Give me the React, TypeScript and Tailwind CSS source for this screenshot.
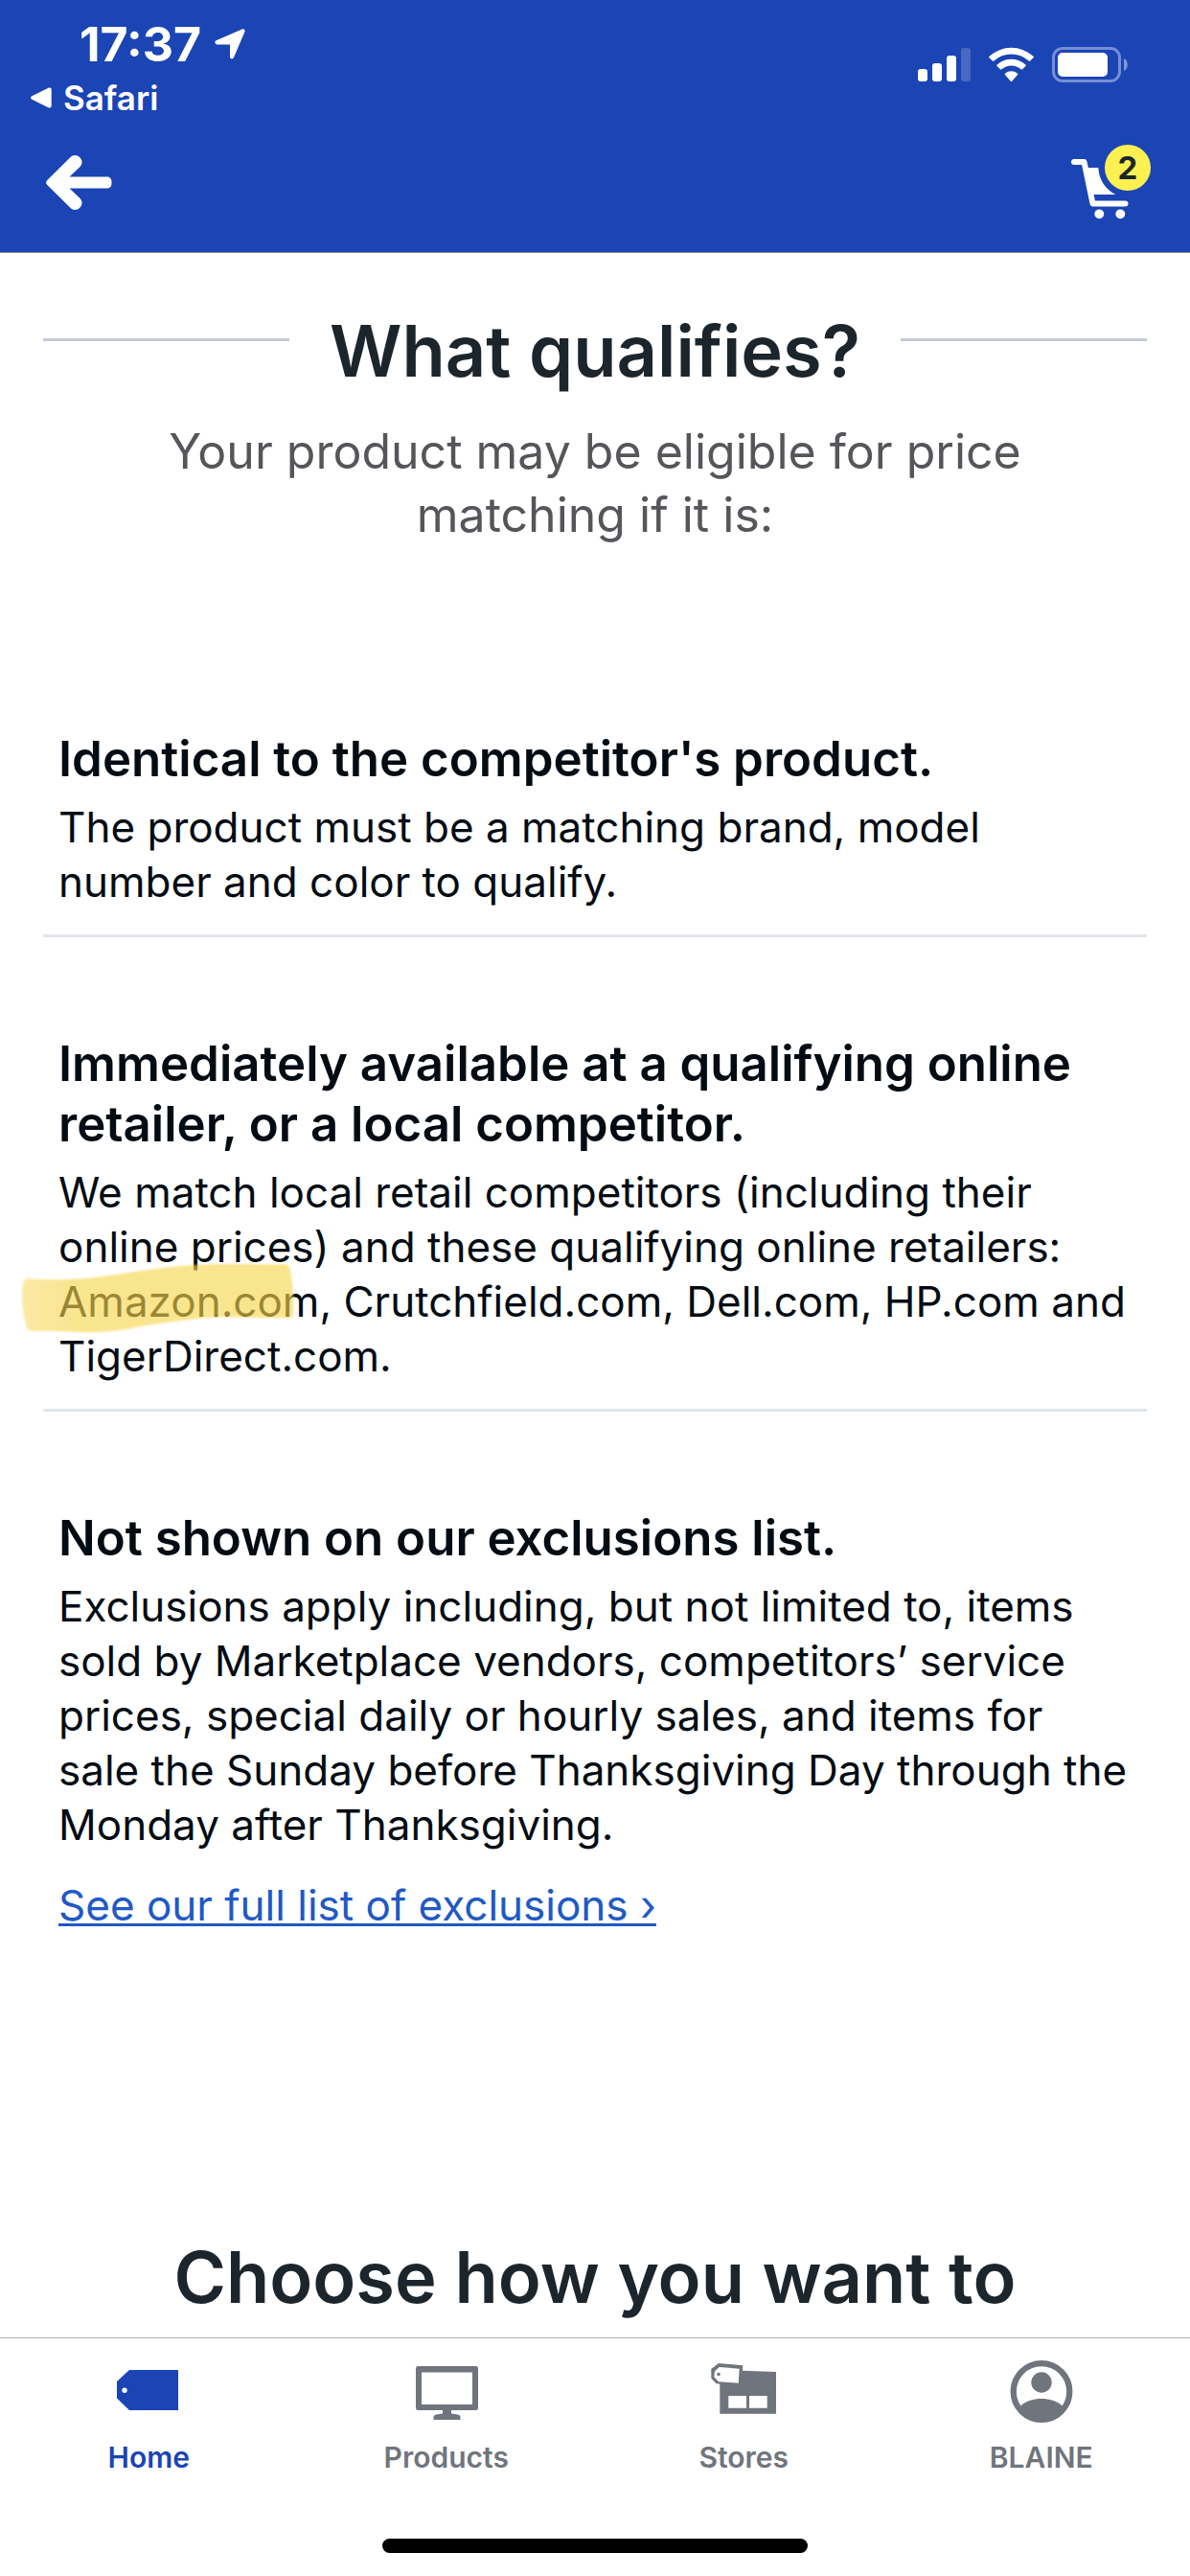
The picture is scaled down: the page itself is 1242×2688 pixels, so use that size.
import React from 'react';

function StatusBar() {
  return (
    <div className="flex items-start justify-between pt-5 pr-[62px] pl-8 text-white">
      <div className="flex flex-col">
        <div className="flex items-center gap-[14px] pl-[51px]">
          <span className="text-[50px] leading-[52px] font-bold">17:37</span>
          <svg className="h-8 w-8" viewBox="0 0 32 32" fill="currentColor" aria-hidden="true">
            <path d="M1.6 12.2 28.6.4c2-.9 3.6.8 2.8 2.8L20 30c-.9 2.1-4 1.6-4-.8V16.400H2.800c-2.500 0-3.400-3.200-1.200-4.200Z" />
          </svg>
        </div>
        <button type="button" className="flex items-center gap-3 self-start text-[35px] leading-[60px] font-semibold">
          <svg className="h-[22px] w-[22px]" viewBox="0 0 22 22" fill="currentColor" aria-hidden="true">
            <path d="M1.3 9.2 18.500.8C20.300 0 21.700.9 21.700 2.500v17c0 1.600-1.400 2.500-3.200 1.700L1.300 12.800C-.3 12-.3 10 1.300 9.200Z" />
          </svg>
          Safari
        </button>
      </div>
      <div className="flex items-center pt-7">
        <svg className="h-[38px] w-[224px]" viewBox="0 0 224 38" fill="currentColor" aria-hidden="true">
          <rect x="2" y="24" width="10" height="13" rx="3" />
          <rect x="17" y="18" width="10" height="19" rx="3" />
          <rect x="32" y="10" width="10" height="27" rx="3" />
          <rect x="47" y="2" width="10" height="35" rx="3" opacity=".2" />
          <path d="M76.500 10.800a34 34 0 0 1 46 0q.8.7 0 1.500l-3.300 3.300q-.7.7-1.500 0a26.800 26.800 0 0 0-36.400 0q-.8.7-1.500 0l-3.300-3.300q-.8-.8 0-1.500Z" />
          <path d="M84.600 19.400a22.500 22.500 0 0 1 29.800 0q.8.7 0 1.500l-3.300 3.300q-.7.7-1.500 0a15.300 15.300 0 0 0-20.200 0q-.8.7-1.500 0l-3.300-3.300q-.8-.8 0-1.500Z" />
          <path d="M92.900 28.700a10.500 10.500 0 0 1 13.200 0q.8.7 0 1.400l-5.700 6.400q-.9 1-1.800 0l-5.700-6.400q-.8-.7 0-1.400Z" />
          <rect x="143.500" y="2.500" width="69" height="34" rx="9.500" fill="none" stroke="currentColor" strokeWidth="3" opacity=".4" />
          <rect x="148" y="7" width="52" height="25" rx="5" />
          <path d="M217 13c5 2 5 11 0 13Z" opacity=".45" />
        </svg>
      </div>
    </div>
  );
}

function AppBar() {
  return (
    <div className="flex items-center justify-between pt-[19px] pr-[41px] pb-[34px] pl-12 text-white">
      <button type="button" aria-label="Back">
        <svg className="h-[57px] w-[69px]" viewBox="0 0 69 57" fill="currentColor" aria-hidden="true">
          <path d="M1.300 26 25.300 2.300c3-3 7-3 10 0s3 7 0 10L24.500 22.500H63.500c3 0 5 2 5 5v2c0 3-2 5-5 5H24.500L35.300 44.700c3 3 3 7 0 10s-7 3-10 0L1.300 31c-1.600-1.600-1.600-3.400 0-5Z" />
        </svg>
      </button>
      <button type="button" aria-label="Cart, 2 items" className="relative h-[78px] w-[84px]">
        <svg className="h-[78px] w-[84px]" viewBox="0 0 84 78" fill="currentColor" aria-hidden="true">
          <path d="M4 18H14.500L23.500 61.500H57.500" fill="none" stroke="currentColor" strokeWidth="6" strokeLinecap="round" strokeLinejoin="round" />
          <path d="M17 24H29.300C30 37 37 47 47.500 52H23Z" />
          <circle cx="30.300" cy="72.300" r="4.900" />
          <circle cx="52.300" cy="72.300" r="4.900" />
        </svg>
        <span className="absolute top-0 right-0 flex h-12 w-12 items-center justify-center rounded-full bg-[#fdf151] text-[33px] leading-none font-bold text-[#1d252c]">
          2
        </span>
      </button>
    </div>
  );
}

function Section({ title, children, last = false }: { title: React.ReactNode; children: React.ReactNode; last?: boolean }) {
  return (
    <section className={last ? 'px-4 pt-[100px]' : 'border-b-[3px] border-[#e0e6ef] px-4 pt-[100px] pb-[26px]'}>
      <h2 className="mb-3 text-[51px] leading-[63px] font-semibold">{title}</h2>
      {children}
    </section>
  );
}

function Tab({ label, active = false, children }: { label: string; active?: boolean; children: React.ReactNode }) {
  return (
    <a
      href="#"
      aria-current={active ? 'page' : undefined}
      className={
        active
          ? 'flex flex-1 flex-col items-center gap-[17px] text-[#1b44b5]'
          : 'flex flex-1 flex-col items-center gap-[17px] text-[#70757d]'
      }
    >
      <svg className="h-[68px] w-[68px]" viewBox="0 0 68 68" fill="currentColor" aria-hidden="true">
        {children}
      </svg>
      <span className="text-[30px] leading-9 font-semibold">{label}</span>
    </a>
  );
}

function Highlight() {
  return (
    <svg className="absolute -top-3 -left-10 h-[72px] w-[290px] overflow-visible" viewBox="0 0 290 72" aria-hidden="true">
      <defs>
        <linearGradient id="marker" x1="0" x2="1" y1="0" y2="0">
          <stop offset="0" stopColor="#f7d54c" stopOpacity=".5" />
          <stop offset=".2" stopColor="#f7d54c" stopOpacity=".62" />
          <stop offset="1" stopColor="#f7d54c" stopOpacity=".62" />
        </linearGradient>
        <filter id="soften" x="-5%" y="-10%" width="110%" height="120%">
          <feGaussianBlur stdDeviation="1.3" />
        </filter>
      </defs>
      <path
        d="M9 15C35 17 60 16 77 14C110 10 145 3 181 1C215 -1 245 1 276 0Q281 0 282 6Q286 30 285 52Q285 57 280 56C250 57 220 54 194 56C170 59 150 61 127 65C105 70 80 72 61 71C45 70 25 70 13 70Q7 70 6 64Q0 40 3 20Q4 15 9 15Z"
        fill="url(#marker)"
        filter="url(#soften)"
      />
    </svg>
  );
}

const titleClass = 'text-[74px] leading-[90px] font-semibold text-[#1d252c]';

export default function App() {
  return (
    <div className="flex h-screen flex-col overflow-hidden bg-white font-['Inter',sans-serif] text-[#040c13]">
      <header className="border-b border-[#8e8e93] bg-[#1b44b5]">
        <StatusBar />
        <AppBar />
      </header>

      <main className="min-h-0 flex-1 overflow-hidden px-[45px] pt-[57px]">
        <div className="flex items-start gap-[42px]">
          <span className="mt-8 h-[3px] flex-1 bg-[#c5cad8]" />
          <h1 className={titleClass}>What qualifies?</h1>
          <span className="mt-8 h-[3px] flex-1 bg-[#c5cad8]" />
        </div>
        <p className="mt-[27px] text-center text-[50px] leading-[66px] text-[#55555a]">
          Your product may be eligible for price
          <br />
          matching if it is:
        </p>

        <div className="mt-[90px] text-[44px] leading-[57px]">
          <Section title="Identical to the competitor's product.">
            <p>
              The product must be a matching brand, model
              <br />
              number and color to qualify.
            </p>
          </Section>
          <Section
            title={
              <>
                Immediately available at a qualifying online
                <br />
                retailer, or a local competitor.
              </>
            }
          >
            <p>
              We match local retail competitors (including their
              <br />
              online prices) and these qualifying online retailers:
              <br />
              <span className="relative">
                Amazon.com
                <Highlight />
              </span>
              , Crutchfield.com, Dell.com, HP.com and
              <br />
              TigerDirect.com.
            </p>
          </Section>
          <Section title="Not shown on our exclusions list." last>
            <p>
              Exclusions apply including, but not limited to, items
              <br />
              sold by Marketplace vendors, competitors’ service
              <br />
              prices, special daily or hourly sales, and items for
              <br />
              sale the Sunday before Thanksgiving Day through the
              <br />
              Monday after Thanksgiving.
            </p>
            <p className="mt-[27px]">
              <a href="#" className="text-[#2159c4] underline decoration-[3px] underline-offset-[3px]">
                See our full list of exclusions ›
              </a>
            </p>
          </Section>
        </div>

        <h2 className={`mt-[314px] text-center ${titleClass}`}>Choose how you want to</h2>
      </main>

      <footer className="border-t border-[#b0b0b3] bg-white pt-[21px] pb-6">
        <nav className="flex">
          <Tab label="Home" active>
            <path fillRule="evenodd" d="M14 12H65V54H14L1 41.500V24ZM9 30.600a2.700 2.700 0 1 0 0 5.400a2.700 2.700 0 1 0 0-5.400Z" />
          </Tab>
          <Tab label="Products">
            <path
              fillRule="evenodd"
              d="M4.500 8H64.500Q67 8 67 10.500V51.500Q67 54 64.500 54H39V57.500C44 58 48.500 58.500 48.500 61V64H20.500V61C20.500 58.500 25 58 30 57.500V54H4.500Q2 54 2 51.500V10.500Q2 8 4.500 8ZM8 14.500V48H61V14.500Z"
            />
          </Tab>
          <Tab label="Stores">
            <path
              fillRule="evenodd"
              d="M8 5 33.300 7.300 33 12.700 68 14V57.700H9.300V26.700L5.300 26 .3 20.700V11ZM8.700 9 4 13.300 3.300 19.300 8 24.300 28.700 25.700 29.700 10.700ZM18.300 39V51.700H37V39ZM40 39V51.700H58.700V39Z"
            />
            <circle cx="8" cy="16.500" r="1.800" />
          </Tab>
          <Tab label="BLAINE">
            <circle cx="34" cy="34.500" r="29.300" fill="none" stroke="currentColor" strokeWidth="6.300" />
            <circle cx="34" cy="25" r="10.700" />
            <path d="M12.300 49.500C18 44 26 42 34 42S50 44 55.700 49.500L52 60Q34 70 16 60Z" />
          </Tab>
        </nav>
        <div className="mx-auto mt-[67px] h-[15px] w-[444px] rounded-full bg-black" />
      </footer>
    </div>
  );
}
